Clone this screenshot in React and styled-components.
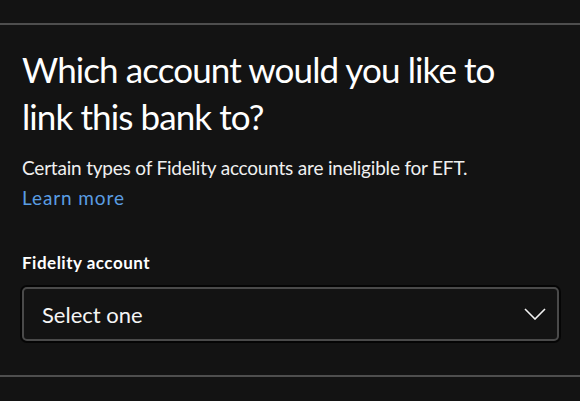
import React from "react";
import styled, { createGlobalStyle } from "styled-components";

const Global = createGlobalStyle`
  html, body { margin: 0; padding: 0; background: #131313; }
  body { font-family: Lato, "Noto Sans", sans-serif; color: #f2f2f2; }
`;

const Page = styled.div`
  width: 580px;
  height: 401px;
  background: #131313;
  padding-top: 23px;
  box-sizing: border-box;
  overflow: hidden;
`;

const Divider = styled.hr`
  margin: 0;
  border: none;
  height: 2px;
  background: #4e4e4e;
`;

const Content = styled.section`
  padding: 21px 21px 34px 22px;
  display: flex;
  flex-direction: column;
`;

const Heading = styled.h1`
  margin: 0;
  max-width: 515px;
  font-size: 35px;
  font-weight: 400;
  line-height: 47px;
  letter-spacing: -0.9px;
  color: #ffffff;
`;

const Body = styled.p`
  margin: 13px 0 0;
  font-size: 19px;
  line-height: 30px;
  letter-spacing: -0.2px;
  color: #f0f0f0;
`;

const Link = styled.a`
  align-self: flex-start;
  color: #5a9de2;
  text-decoration: none;
  font-size: 19px;
  line-height: 30px;
  letter-spacing: 0.9px;
`;

const Label = styled.label`
  margin-top: 39px;
  font-size: 17px;
  font-weight: 700;
  line-height: 22px;
  letter-spacing: 0.5px;
  color: #ffffff;
`;

const SelectBox = styled.div`
  margin-top: 13px;
  height: 54px;
  box-sizing: border-box;
  border: 2px solid #4a4a4a;
  border-radius: 5px;
  box-shadow: 0 0 0 2px #050505;
  display: flex;
  align-items: center;
  justify-content: space-between;
  padding: 0 11px 0 18px;
  font-size: 22px;
  color: #f5f5f5;
`;

const Chevron = () => (
  <svg width="22" height="12" viewBox="0 0 22 12" fill="none">
    <path d="M1 1 L11 11 L21 1" stroke="#f2f2f2" strokeWidth="1.6" />
  </svg>
);

export default function App() {
  return (
    <Page>
      <Global />
      <Divider />
      <Content>
        <Heading>Which account would you like to link this bank to?</Heading>
        <Body>Certain types of Fidelity accounts are ineligible for EFT.</Body>
        <Link href="#">Learn more</Link>
        <Label>Fidelity account</Label>
        <SelectBox>
          <span>Select one</span>
          <Chevron />
        </SelectBox>
      </Content>
      <Divider />
    </Page>
  );
}
